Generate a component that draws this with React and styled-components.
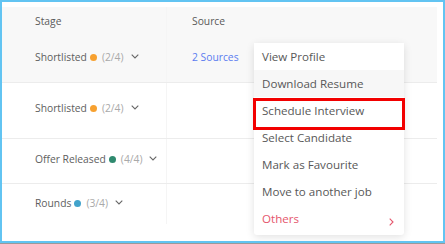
import React from 'react';
import styled, { createGlobalStyle } from 'styled-components';

const GlobalStyle = createGlobalStyle`
  html, body {
    margin: 0;
    padding: 0;
    background: #9a9a9a;
  }
  * {
    box-sizing: border-box;
  }
`;

const Frame = styled.div`
  position: relative;
  width: 445px;
  height: 243px;
  border: 2px solid #62c4f2;
  background: #fff;
  padding: 5px 6px 0 0;
  font-family: 'Open Sans', 'Liberation Sans', sans-serif;
  overflow: hidden;
`;

const Table = styled.div`
  display: flex;
  flex-direction: column;
`;

const Row = styled.div`
  display: grid;
  grid-template-columns: 165px 1fr;
  height: ${(p) => p.$h}px;
  background: ${(p) => (p.$shaded ? '#f8f8f8' : '#fff')};
  border-bottom: ${(p) => (p.$line ? '1px solid #ececec' : 'none')};
`;

const Cell = styled.div`
  display: flex;
  align-items: flex-start;
  padding-top: ${(p) => p.$pt}px;
  padding-left: ${(p) => (p.$first ? 33 : 25)}px;
  border-right: ${(p) => (p.$first ? '1px solid #f5f5f5' : 'none')};
  font-size: 10.3px;
  line-height: 16px;
  color: #5a5a5a;
`;

const StageName = styled.span`
  color: #5e5e5e;
`;

const Dot = styled.span`
  width: 7px;
  height: 7px;
  border-radius: 50%;
  background: ${(p) => p.$color};
  margin: 5px 0 0 3px;
  flex-shrink: 0;
`;

const Count = styled.span`
  color: #a9a9a9;
  margin-left: 5px;
`;

const Caret = styled.svg`
  margin: 5px 0 0 7px;
`;

const SourceLink = styled.span`
  color: #5b7cf0;
`;

const Menu = styled.div`
  position: absolute;
  left: 252px;
  top: 41px;
  width: 150px;
  padding: 0 0 3px;
  background: #fff;
  border-radius: 3px;
  box-shadow: 0 2px 8px rgba(0, 0, 0, 0.12);
  display: flex;
  flex-direction: column;
`;

const Item = styled.div`
  display: flex;
  align-items: center;
  justify-content: space-between;
  height: 27px;
  padding: 0 10px 0 8px;
  font-size: 11.6px;
  color: ${(p) => (p.$danger ? '#e5566c' : '#585858')};
  background: ${(p) => (p.$hover ? '#f7f7f7' : '#fff')};
`;

const Highlight = styled.div`
  position: absolute;
  left: -1px;
  top: 55px;
  width: 152px;
  height: 32px;
  border: 3px solid #f20000;
  pointer-events: none;
`;

const ChevronDown = () => (
  <Caret width="8" height="5" viewBox="0 0 8 5">
    <path d="M0.7 0.7 L4 3.9 L7.3 0.7" fill="none" stroke="#666" strokeWidth="1.1" />
  </Caret>
);

const ChevronRight = () => (
  <svg width="5" height="8" viewBox="0 0 5 8" style={{ marginTop: 7 }}>
    <path d="M0.7 0.7 L4 4 L0.7 7.3" fill="none" stroke="#e5566c" strokeWidth="1.1" />
  </svg>
);

const rows = [
  { name: 'Shortlisted', color: '#f7a130', count: '(2/4)', h: 43, pt: 9, shaded: true, source: '2 Sources' },
  { name: 'Shortlisted', color: '#f7a130', count: '(2/4)', h: 56, pt: 17 },
  { name: 'Offer Released', color: '#2f8a6f', count: '(4/4)', h: 45, pt: 12 },
  { name: 'Rounds', color: '#41a3cc', count: '(3/4)', h: 40, pt: 11, noLine: true },
];

const actions = [
  'View Profile',
  'Download Resume',
  'Schedule Interview',
  'Select Candidate',
  'Mark as Favourite',
  'Move to another job',
];

const App = () => (
  <>
    <GlobalStyle />
    <Frame>
      <Table>
        <Row $h={33} $shaded>
          <Cell $first $pt={6}>Stage</Cell>
          <Cell $pt={6}>Source</Cell>
        </Row>
        {rows.map((r, i) => (
          <Row key={i} $h={r.h} $shaded={r.shaded} $line={!r.noLine}>
            <Cell $first $pt={r.pt}>
              <StageName>{r.name}</StageName>
              <Dot $color={r.color} />
              <Count>{r.count}</Count>
              <ChevronDown />
            </Cell>
            <Cell $pt={r.pt}>{r.source && <SourceLink>{r.source}</SourceLink>}</Cell>
          </Row>
        ))}
      </Table>
      <Menu>
        {actions.map((a) => (
          <Item key={a} $hover={a === 'Download Resume'}>
            {a}
          </Item>
        ))}
        <Item $danger>
          Others
          <ChevronRight />
        </Item>
        <Highlight />
      </Menu>
    </Frame>
  </>
);

export default App;
